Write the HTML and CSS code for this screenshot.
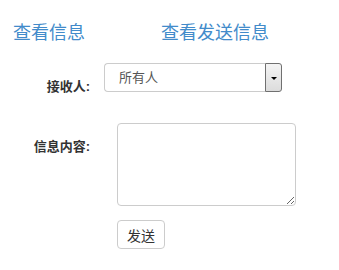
FILE: index.html
```html
<!DOCTYPE html>
<html lang="zh">
<head>
<meta charset="utf-8">
<title>信息</title>
<link rel="stylesheet" href="styles.css">
</head>
<body>
<div class="page">
  <nav class="tabs">
    <a class="tab" href="#">查看信息</a>
    <a class="tab" href="#">查看发送信息</a>
  </nav>
  <form class="form">
    <div class="row">
      <label class="label" for="to">接收人:</label>
      <div class="select-wrap">
        <select id="to" class="select">
          <option>所有人</option>
        </select>
        <span class="arrow"><span class="tri"></span></span>
      </div>
    </div>
    <div class="row row-gap">
      <label class="label" for="msg">信息内容:</label>
      <textarea id="msg" class="textarea"></textarea>
    </div>
    <div class="row row-btn">
      <span class="label"></span>
      <button type="button" class="btn">发送</button>
    </div>
  </form>
</div>
</body>
</html>
```
FILE: styles.css
```css
html, body {
  margin: 0;
  padding: 0;
  background: #fff;
}
body {
  font-family: "Liberation Sans", "Noto Sans CJK SC", sans-serif;
  color: #333;
}
.page {
  padding: 22px 0 0 13px;
}
.tabs {
  display: flex;
  gap: 76px;
}
.tab {
  font-size: 18px;
  line-height: 22px;
  color: #428bca;
  text-decoration: none;
}
.form {
  margin-top: 19px;
  margin-left: -13px;
}
.row {
  display: flex;
  align-items: flex-start;
}
.row-gap {
  margin-top: 28px;
}
.row-btn {
  margin-top: 14px;
}
.label {
  width: 90px;
  flex: none;
  text-align: right;
  font-size: 13px;
  font-weight: bold;
  line-height: 16px;
  padding-top: 16px;
  color: #333;
}
.row-btn .label {
  padding-top: 0;
}
.select-wrap {
  margin-left: 14px;
  display: flex;
  width: 178px;
  height: 29px;
}
.select {
  appearance: none;
  -webkit-appearance: none;
  flex: 1;
  min-width: 0;
  height: 29px;
  box-sizing: border-box;
  border: 1px solid #ccc;
  border-right: none;
  border-radius: 4px 0 0 4px;
  background: #fff;
  padding: 0 0 0 14px;
  font-family: inherit;
  font-size: 13px;
  color: #555;
  outline: none;
}
.arrow {
  width: 17px;
  height: 29px;
  box-sizing: border-box;
  border: 1px solid #707070;
  border-radius: 0 3px 3px 0;
  background: linear-gradient(#f4f4f4, #dcdcdc);
  display: flex;
  align-items: center;
  justify-content: center;
}
.tri {
  width: 0;
  height: 0;
  border-left: 3px solid transparent;
  border-right: 3px solid transparent;
  border-top: 3px solid #000;
  margin-top: 1px;
}
.textarea {
  margin-left: 27px;
  width: 179px;
  height: 83px;
  box-sizing: border-box;
  border: 1px solid #ccc;
  border-radius: 4px;
  padding: 4px 6px;
  font-family: inherit;
  font-size: 13px;
  color: #555;
  resize: both;
  outline: none;
}
.btn {
  margin-left: 27px;
  width: 48px;
  height: 29px;
  box-sizing: border-box;
  border: 1px solid #ccc;
  border-radius: 4px;
  background: #fff;
  font-family: inherit;
  font-size: 14px;
  color: #333;
  padding: 0;
}
```
